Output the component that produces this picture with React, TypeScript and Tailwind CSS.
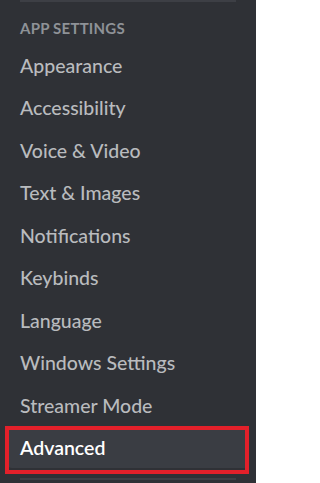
const items = [
  'Appearance',
  'Accessibility',
  'Voice & Video',
  'Text & Images',
  'Notifications',
  'Keybinds',
  'Language',
  'Windows Settings',
  'Streamer Mode',
]

export default function App() {
  return (
    <div
      className="w-[256px] h-[483px] overflow-hidden bg-[#2f3136]"
      style={{ fontFamily: 'Lato, "Noto Sans", sans-serif' }}
    >
      <div className="mx-[20px] h-[2px] bg-[#3d3f45]" />
      <div className="mt-[16px] pl-[20px] text-[15px] leading-[20px] font-bold uppercase tracking-[0.015em] text-[#8e9297]">
        App Settings
      </div>
      <div className="mt-[7.5px] flex flex-col">
        {items.map((label) => (
          <div
            key={label}
            className="mx-[8px] mb-[2.5px] flex h-[40px] items-center rounded-[4px] px-[12px] text-[19.5px] leading-[24px] font-medium text-[#b9bbbe]"
          >
            {label}
          </div>
        ))}
        <div className="relative mx-[8px] flex h-[40px] items-center rounded-[4px] bg-[#3a3d43] px-[12px] text-[19.5px] leading-[24px] font-semibold text-white">
          Advanced
          <div className="absolute left-[-3px] top-[-2px] h-[48px] w-[244px] border-[4px] border-[#e3202a]" />
        </div>
      </div>
      <div className="mx-[20px] mt-[10px] h-[2px] bg-[#3d3f45]" />
    </div>
  )
}
